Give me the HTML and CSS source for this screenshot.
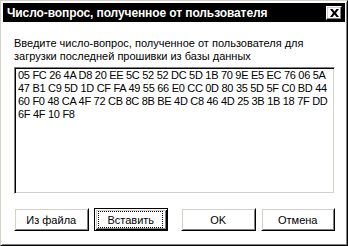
FILE: index.html
```html
<!DOCTYPE html>
<html>
<head>
<meta charset="utf-8">
<link rel="stylesheet" href="styles.css">
</head>
<body>
<div class="window">
  <div class="titlebar">
    <span class="title">Число-вопрос, полученное от пользователя</span>
    <span class="close">
      <svg width="9" height="8" viewBox="0 0 9 8"><path d="M0 0h2.5L4.5 2.5 6.5 0H9L6 4l3 4H6.5L4.5 5.5 2.5 8H0l3-4z" fill="#000"/></svg>
    </span>
  </div>
  <div class="content">
    <p class="prompt">Введите число-вопрос, полученное от пользователя для загрузки последней прошивки из базы данных</p>
    <div class="field">05 FC 26 4A D8 20 EE 5C 52 52 DC 5D 1B 70 9E E5 EC 76 06 5A 47 B1 C9 5D 1D CF FA 49 55 66 E0 CC 0D 80 35 5D 5F C0 BD 44 60 F0 48 CA 4F 72 CB 8C 8B BE 4D C8 46 4D 25 3B 1B 18 7F DD 6F 4F 10 F8</div>
    <div class="buttons">
      <button class="btn">Из файла</button>
      <button class="btn default"><span class="focus">Вставить</span></button>
      <button class="btn ok">OK</button>
      <button class="btn">Отмена</button>
    </div>
  </div>
</div>
</body>
</html>
```
FILE: styles.css
```css
html, body {
  margin: 0;
  padding: 0;
  background: #fff;
}
.window {
  width: 348px;
  height: 246px;
  box-sizing: border-box;
  border: 1px solid;
  border-color: #d4d0c8 #000 #000 #d4d0c8;
  box-shadow: inset 1px 1px #fff, inset -1px -1px #808080;
  padding: 2px;
  background: #fff;
  font-family: "Liberation Sans", Arial, sans-serif;
  font-size: 11px;
  color: #000;
}
.titlebar {
  height: 19px;
  background: #000;
  display: flex;
  align-items: center;
  justify-content: space-between;
  padding: 0 3px 0 4px;
}
.title {
  color: #fff;
  font-weight: bold;
  font-size: 12px;
  letter-spacing: -0.1px;
}
.close {
  width: 16px;
  height: 14px;
  box-sizing: border-box;
  background: #fff;
  border: 1px solid;
  border-color: #fff #000 #000 #fff;
  box-shadow: inset -1px -1px #808080, inset 1px 1px #d4d0c8;
  display: flex;
  align-items: center;
  justify-content: center;
}
.content {
  padding: 0 10px 0 11px;
}
.prompt {
  margin: 15px 0 0;
  line-height: 13px;
}
.field {
  margin-top: 4px;
  height: 127px;
  box-sizing: border-box;
  border: 1px solid;
  border-color: #808080 #fff #fff #808080;
  box-shadow: inset 1px 1px #000, inset -1px -1px #d4d0c8;
  padding: 1px 2px 1px 3px;
  line-height: 13px;
  letter-spacing: -0.3px;
}
.buttons {
  display: flex;
  gap: 5px;
  margin-top: 14px;
}
.btn {
  width: 75px;
  height: 23px;
  box-sizing: border-box;
  background: #fff;
  font-family: "Liberation Sans", Arial, sans-serif;
  font-size: 11px;
  color: #000;
  border: 1px solid;
  border-color: #fff #000 #000 #fff;
  box-shadow: inset 1px 1px #d4d0c8, inset -1px -1px #808080;
  padding: 0;
  margin: 0;
  display: flex;
  align-items: center;
  justify-content: center;
}
.btn.ok {
  margin-left: 8px;
}
.btn.default {
  border-color: #000;
  box-shadow: inset 1px 1px #fff, inset -1px -1px #000, inset 2px 2px #d4d0c8, inset -2px -2px #808080;
}
.focus {
  display: flex;
  align-items: center;
  justify-content: center;
  width: 63px;
  height: 15px;
  border: 1px dotted #000;
}
```
